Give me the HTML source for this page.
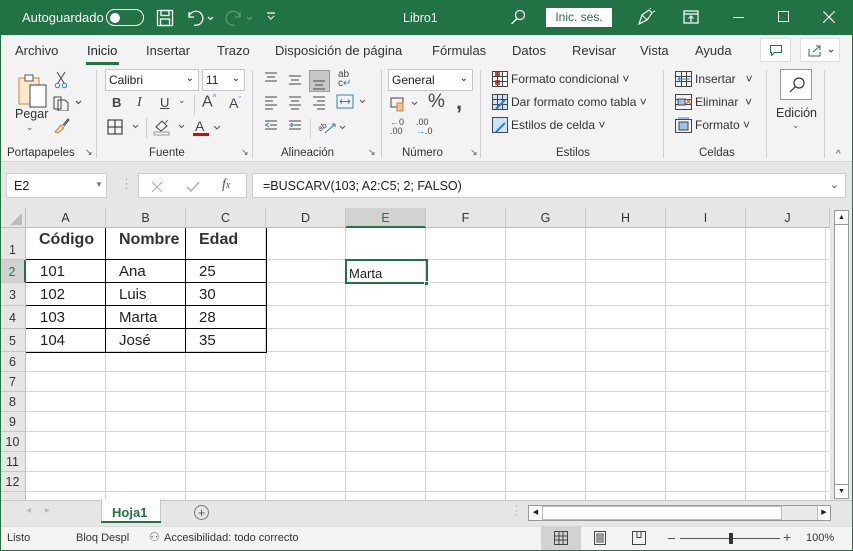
<!DOCTYPE html>
<html><head><meta charset="utf-8"><style>
*{margin:0;padding:0;box-sizing:border-box}
body{width:853px;height:551px;overflow:hidden;font-family:"Liberation Sans",Arial,sans-serif;background:#e6e6e6;position:relative;font-size:12px;color:#222}
.a{position:absolute}
.t{white-space:nowrap}
.title{left:0;top:0;width:853px;height:35px;background:#217346;color:#fff}
.tabs{left:0;top:35px;width:853px;height:30px;background:#f3f3f3}
.rib{left:0;top:65px;width:853px;height:97px;background:#f3f3f3;border-bottom:1px solid #d6d6d6}
.sep{width:1px;background:#d0d0d0;top:70px;height:88px}
.gl{font-size:11.5px;color:#333;top:147px}
.box{background:#fff;border:1px solid #c6c6c6}
.ch{top:208px;height:20px;background:#e6e6e6;border-right:1px solid #c8c8c8;border-bottom:1px solid #bdbdbd;text-align:center;line-height:20px;font-size:12.5px;color:#333}
.rh{left:0;width:26px;background:#e6e6e6;border-bottom:1px solid #c8c8c8;border-right:1px solid #bdbdbd;text-align:center;font-size:12.5px;color:#333}
.hl{left:26px;width:803px;height:1px;background:#d4d4d4}
.c{font-size:15px;color:#222}
.b{font-weight:bold;font-size:16px;color:#333}
.ic{color:#444;font-size:14px}
</style></head><body>
<div class="a title">
 <div class="a t" style="left:22px;top:10px;font-size:13px">Autoguardado</div>
 <div class="a" style="left:106px;top:9px;width:38px;height:17px;border:1.5px solid #fff;border-radius:9px"><div class="a" style="left:3px;top:2.5px;width:10px;height:10px;border-radius:5px;background:#fff"></div></div>
 <svg class="a" style="left:156px;top:9px" width="18" height="18" viewBox="0 0 18 18" fill="none" stroke="#fff" stroke-width="1.3"><rect x="1.5" y="1.5" width="15" height="15"/><rect x="5" y="1.5" width="8" height="5"/><rect x="4.5" y="10" width="9" height="6.5"/></svg>
 <svg class="a" style="left:186px;top:9px" width="30" height="18" viewBox="0 0 30 18" fill="none" stroke="#fff" stroke-width="1.3"><path d="M3 3v5h5M3 8a7 7 0 1 1 5 8"/><path d="M22 8l2.5 2.5L27 8"/></svg>
 <svg class="a" style="left:225px;top:9px" width="30" height="18" viewBox="0 0 30 18" fill="none" stroke="#5e9a76" stroke-width="1.3"><path d="M15 3v5h-5M15 8a7 7 0 1 0 -5 8"/><path d="M22 8l2.5 2.5L27 8"/></svg>
 <svg class="a" style="left:266px;top:11px" width="10" height="10" viewBox="0 0 10 10" stroke="#fff" fill="none" stroke-width="1.2"><path d="M1 2h8M2 5l3 3 3-3"/></svg>
 <div class="a t" style="left:403px;top:11px;font-size:12.5px">Libro1</div>
 <svg class="a" style="left:510px;top:9px" width="16" height="16" viewBox="0 0 16 16" fill="none" stroke="#fff" stroke-width="1.3"><circle cx="10" cy="6" r="4.5"/><path d="M7 9.5L1.5 15"/></svg>
 <div class="a t" style="left:546px;top:8px;width:66px;height:19px;background:#fff;color:#217346;text-align:center;line-height:19px;font-size:12px">Inic. ses.</div>
 <svg class="a" style="left:636px;top:8px" width="20" height="18" viewBox="0 0 20 18" fill="none" stroke="#fff" stroke-width="1.2"><path d="M3 16l3-9 7-5 3 3-5 7-8 4zM6 7l5 5M14 1l1-1M17 4l2-1"/></svg>
 <svg class="a" style="left:683px;top:10px" width="16" height="14" viewBox="0 0 16 14" fill="none" stroke="#fff" stroke-width="1.2"><rect x="1" y="1" width="14" height="12"/><path d="M1 4h14M8 12V6M5.5 8.5L8 6l2.5 2.5"/></svg>
 <div class="a" style="left:733px;top:17px;width:11px;height:1px;background:#fff"></div>
 <div class="a" style="left:778px;top:11px;width:11px;height:11px;border:1.2px solid #fff"></div>
 <svg class="a" style="left:823px;top:11px" width="12" height="12" viewBox="0 0 12 12" stroke="#fff" stroke-width="1.2"><path d="M0 0L12 12M12 0L0 12"/></svg>
</div>
<div class="a tabs">
 <div class="a t" style="left:15px;top:8px;font-size:13px;color:#333">Archivo</div>
 <div class="a t" style="left:87px;top:8px;font-size:13px;color:#222">Inicio</div>
 <div class="a" style="left:86px;top:27px;width:33px;height:3px;background:#217346"></div>
 <div class="a t" style="left:146px;top:8px;font-size:13px;color:#333">Insertar</div>
 <div class="a t" style="left:217px;top:8px;font-size:13px;color:#333">Trazo</div>
 <div class="a t" style="left:275px;top:8px;font-size:13px;color:#333">Disposición de página</div>
 <div class="a t" style="left:432px;top:8px;font-size:13px;color:#333">Fórmulas</div>
 <div class="a t" style="left:512px;top:8px;font-size:13px;color:#333">Datos</div>
 <div class="a t" style="left:572px;top:8px;font-size:13px;color:#333">Revisar</div>
 <div class="a t" style="left:640px;top:8px;font-size:13px;color:#333">Vista</div>
 <div class="a t" style="left:695px;top:8px;font-size:13px;color:#333">Ayuda</div>
 <div class="a box" style="left:760px;top:3px;width:31px;height:24px;border-color:#ddd"><svg class="a" style="left:9px;top:6px" width="12" height="11" viewBox="0 0 12 11" fill="none" stroke="#217346"><path d="M.5.5h11v7h-7l-3 3v-3h-1z"/></svg></div>
 <div class="a box" style="left:800px;top:3px;width:40px;height:24px;border-color:#ddd"><svg class="a" style="left:7px;top:5px" width="28" height="13" viewBox="0 0 28 13" fill="none" stroke="#217346"><path d="M1 5v7h11v-4M5 8l7-6M8 2h4v4"/><path d="M21 6l2 2 2-2" stroke="#444"/></svg></div>
</div>
<div class="a rib">
 <!-- Portapapeles -->
 <svg class="a" style="left:17px;top:8px" width="32" height="36" viewBox="0 0 32 36" fill="none"><rect x="2" y="5" width="20" height="26" fill="#fbe8c8" stroke="#c9853a"/><rect x="8" y="2" width="8" height="6" fill="#fff" stroke="#555"/><rect x="13" y="12" width="16" height="22" fill="#fff" stroke="#444"/></svg>
 <div class="a t" style="left:15px;top:42px;font-size:12.5px;color:#333">Pegar</div>
 <div class="a t" style="left:26px;top:57px;font-size:9px;color:#555">⌄</div>
 <svg class="a" style="left:54px;top:6px" width="14" height="18" viewBox="0 0 14 18" fill="none" stroke="#444"><path d="M3 1l7 11M11 1L4 12"/><circle cx="3.5" cy="14.5" r="2.2" stroke="#2b7cd3"/><circle cx="10.5" cy="14.5" r="2.2" stroke="#2b7cd3"/></svg>
 <svg class="a" style="left:53px;top:30px" width="30" height="16" viewBox="0 0 30 16" fill="none" stroke="#444"><path d="M1 2h7v12H1zM5 5h7l3 3v8H5z"/><path d="M23 6l2.5 2.5L28 6"/></svg>
 <svg class="a" style="left:54px;top:53px" width="16" height="16" viewBox="0 0 16 16" fill="none" stroke="#c9853a"><path d="M1 14l6-7 3 3-6 5z" fill="#fbd9a8"/><path d="M9 7l5-6 1 1-5 6" stroke="#444"/></svg>
 <div class="a gl t" style="left:7px;top:82px">Portapapeles</div>
 <div class="a t" style="left:85px;top:82px;font-size:9px;color:#555">↘</div>
 <div class="a sep" style="left:96px;top:5px"></div>
 <!-- Fuente -->
 <div class="a box" style="left:105px;top:4px;width:94px;height:22px"><span class="a t" style="left:3px;top:3px;font-size:12px">Calibri</span><span class="a" style="right:4px;top:3px;font-size:10px">⌄</span></div>
 <div class="a box" style="left:202px;top:4px;width:43px;height:22px"><span class="a t" style="left:3px;top:3px;font-size:12px">11</span><span class="a" style="right:4px;top:3px;font-size:10px">⌄</span></div>
 <div class="a t" style="left:112px;top:30px;font-weight:bold;font-size:13px;color:#444">B</div>
 <div class="a t" style="left:137px;top:30px;font-style:italic;font-family:'Liberation Serif';font-size:14px;color:#444">I</div>
 <div class="a t" style="left:160px;top:30px;text-decoration:underline;font-size:13px;color:#444">U</div>
 <div class="a t" style="left:178px;top:30px;font-size:9px;color:#555">⌄</div>
 <div class="a" style="left:194px;top:30px;width:1px;height:20px;background:#d0d0d0"></div>
 <div class="a t" style="left:202px;top:28px;font-size:16px;color:#444">A<sup style="font-size:8px;color:#2b7cd3">^</sup></div>
 <div class="a t" style="left:229px;top:30px;font-size:14px;color:#444">A<sup style="font-size:8px;color:#2b7cd3">ˇ</sup></div>
 <svg class="a" style="left:107px;top:54px" width="35" height="16" viewBox="0 0 35 16" fill="none" stroke="#222"><rect x="1" y="1" width="14" height="14"/><path d="M8 1v14M1 8h14"/><path d="M26 6l2.5 2.5L31 6" stroke="#555"/></svg>
 <div class="a" style="left:146px;top:53px;width:1px;height:20px;background:#d0d0d0"></div>
 <svg class="a" style="left:153px;top:52px" width="35" height="20" viewBox="0 0 35 20" fill="none" stroke="#444"><path d="M3 10l6-6 5 5-6 5z"/><path d="M12 6l3-3" stroke="#2b7cd3"/><rect x="1" y="15" width="15" height="3" stroke="#999"/><path d="M26 8l2.5 2.5L31 8" stroke="#555"/></svg>
 <div class="a t" style="left:195px;top:53px;font-size:14px;color:#444">A</div>
 <div class="a" style="left:193px;top:68px;width:16px;height:3px;background:#e00"></div>
 <svg class="a" style="left:213px;top:60px" width="10" height="6" viewBox="0 0 10 6" fill="none" stroke="#555"><path d="M1 1l3 3 3-3"/></svg>
 <div class="a gl t" style="left:149px;top:82px">Fuente</div>
 <div class="a t" style="left:241px;top:82px;font-size:9px;color:#555">↘</div>
 <div class="a sep" style="left:252px;top:5px"></div>
 <!-- Alineacion -->
 <svg class="a" style="left:264px;top:5px" width="70" height="70" viewBox="0 0 70 70" fill="none" stroke="#444">
  <path d="M1 3h12M3 7h8M1 11h12"/><path d="M25 6h12M27 10h8M25 14h12"/>
  <rect x="45.5" y=".5" width="20" height="21" fill="#c8c8c8" stroke="#999"/><path d="M49 11h12M51 15h8M49 19h12"/>
  <path d="M1 27h12M1 31h8M1 35h12M1 39h8"/><path d="M25 27h12M27 31h8M25 35h12M27 39h8"/><path d="M49 27h12M53 31h8M49 35h12M53 39h8"/>
  <path d="M1 51h12M6 55h7M1 59h12M2 55h-1" /><path d="M5 53l-3 2 3 2" stroke="#2b7cd3"/>
  <path d="M25 51h12M30 55h7M25 59h12"/><path d="M25 55h4l-2-2M29 55l-2 2" stroke="#2b7cd3"/>
 </svg>
 <div class="a t" style="left:338px;top:5px;font-size:10px;line-height:9px;color:#444">ab<br>c<span style="color:#2b7cd3">↵</span></div>
 <svg class="a" style="left:336px;top:29px" width="32" height="16" viewBox="0 0 32 16" fill="none" stroke="#2b7cd3"><rect x="1" y="1" width="16" height="13"/><path d="M4 7.5h10M4 7.5l2-2M4 7.5l2 2M14 7.5l-2-2M14 7.5l-2 2"/><path d="M24 6l2.5 2.5L29 6" stroke="#555"/></svg>
 <div class="a" style="left:310px;top:54px;width:1px;height:20px;background:#d0d0d0"></div>
 <svg class="a" style="left:317px;top:53px" width="34" height="18" viewBox="0 0 34 18" fill="none" stroke="#444"><text x="1" y="11" font-size="8" fill="#444" stroke="none" transform="rotate(-35 6 9)">ab</text><path d="M8 15l10-9M18 6h-3M18 6v3" stroke="#2b7cd3"/><path d="M23 8l2.5 2.5L28 8" stroke="#555"/></svg>
 <div class="a gl t" style="left:281px;top:82px">Alineación</div>
 <div class="a t" style="left:368px;top:82px;font-size:9px;color:#555">↘</div>
 <div class="a sep" style="left:381px;top:5px"></div>
 <!-- Numero -->
 <div class="a box" style="left:388px;top:4px;width:85px;height:22px"><span class="a t" style="left:3px;top:3px;font-size:12px">General</span><span class="a" style="right:4px;top:3px;font-size:10px">⌄</span></div>
 <svg class="a" style="left:390px;top:31px" width="34" height="16" viewBox="0 0 34 16" fill="none" stroke="#444"><rect x="1" y="2" width="12" height="9"/><rect x="7" y="7" width="6" height="8" fill="#f2c391" stroke="#c9853a"/><path d="M22 6l2.5 2.5L27 6" stroke="#555"/></svg>
 <div class="a t" style="left:428px;top:26px;font-size:19px;color:#444">%</div>
 <div class="a t" style="left:456px;top:24px;font-size:22px;font-weight:bold;color:#444">,</div>
 <div class="a t" style="left:390px;top:53px;font-size:9px;line-height:9px;color:#444"><span style="color:#2b7cd3">←</span>0<br>.00</div>
 <div class="a t" style="left:416px;top:53px;font-size:9px;line-height:9px;color:#444">.00<br><span style="color:#2b7cd3">→</span>.0</div>
 <div class="a gl t" style="left:402px;top:82px">Número</div>
 <div class="a t" style="left:470px;top:82px;font-size:9px;color:#555">↘</div>
 <div class="a sep" style="left:480px;top:5px"></div>
 <!-- Estilos -->
 <svg class="a" style="left:492px;top:6px" width="16" height="16" viewBox="0 0 16 16" fill="none" stroke="#444"><rect x=".5" y=".5" width="15" height="15" fill="#fff"/><rect x="3" y="1" width="5" height="5" fill="#e04848" stroke="none"/><rect x="3" y="9" width="5" height="5" fill="#e04848" stroke="none"/><path d="M.5 5.5h15M.5 10.5h15M5.5.5v15M10.5.5v15"/></svg>
 <div class="a t" style="left:511px;top:7px;font-size:12px;color:#333">Formato condicional ˅</div>
 <svg class="a" style="left:492px;top:29px" width="16" height="16" viewBox="0 0 16 16" fill="none" stroke="#444"><rect x=".5" y=".5" width="15" height="15" fill="#cfe3f7"/><path d="M.5 5.5h15M.5 10.5h15M5.5.5v15M10.5.5v15"/><path d="M4 15l9-9" stroke="#2b7cd3" stroke-width="2"/></svg>
 <div class="a t" style="left:511px;top:30px;font-size:12px;color:#333">Dar formato como tabla ˅</div>
 <svg class="a" style="left:492px;top:52px" width="16" height="16" viewBox="0 0 16 16" fill="none" stroke="#444"><rect x=".5" y=".5" width="15" height="15" fill="#cfe3f7"/><path d="M4 15l9-9" stroke="#2b7cd3" stroke-width="2"/></svg>
 <div class="a t" style="left:511px;top:53px;font-size:12px;color:#333">Estilos de celda ˅</div>
 <div class="a gl t" style="left:556px;top:82px">Estilos</div>
 <div class="a sep" style="left:663px;top:5px"></div>
 <!-- Celdas -->
 <svg class="a" style="left:675px;top:6px" width="17" height="16" viewBox="0 0 17 16" fill="none" stroke="#444"><rect x=".5" y=".5" width="16" height="15"/><path d="M.5 5.5h16M.5 10.5h16M6.5.5v15M11.5.5v15"/><path d="M3 8h12M3 8l3-3M3 8l3 3" stroke="#2b7cd3"/></svg>
 <div class="a t" style="left:695px;top:7px;font-size:12px;color:#333">Insertar &nbsp;&nbsp;˅</div>
 <svg class="a" style="left:675px;top:29px" width="17" height="16" viewBox="0 0 17 16" fill="none" stroke="#444"><rect x=".5" y=".5" width="16" height="15"/><path d="M.5 5.5h16M.5 10.5h16"/><rect x="3" y="5" width="7" height="6" fill="#9cc3ec"/><path d="M11 5l5 5M16 5l-5 5" stroke="#e05a1a"/></svg>
 <div class="a t" style="left:695px;top:30px;font-size:12px;color:#333">Eliminar &nbsp;˅</div>
 <svg class="a" style="left:675px;top:52px" width="17" height="16" viewBox="0 0 17 16" fill="none" stroke="#444"><rect x=".5" y="2.5" width="16" height="13"/><rect x="4" y="5" width="9" height="8" fill="#9cc3ec"/><path d="M3 1h11" stroke="#2b7cd3"/></svg>
 <div class="a t" style="left:695px;top:53px;font-size:12px;color:#333">Formato ˅</div>
 <div class="a gl t" style="left:699px;top:82px">Celdas</div>
 <div class="a sep" style="left:766px;top:5px"></div>
 <div class="a" style="left:780px;top:4px;width:32px;height:31px;border:1px solid #999;background:#fff"><svg class="a" style="left:7px;top:6px" width="18" height="18" viewBox="0 0 18 18" fill="none" stroke="#333" stroke-width="1.2"><circle cx="11" cy="7" r="5"/><path d="M7.5 10.5L2 16"/></svg></div>
 <div class="a t" style="left:776px;top:41px;font-size:12.5px;color:#333">Edición</div>
 <div class="a t" style="left:792px;top:55px;font-size:9px;color:#555">⌄</div>
 <div class="a sep" style="left:824px;top:5px"></div>
 <div class="a t" style="left:836px;top:84px;font-size:10px;color:#444">^</div>
</div>
<!-- formula bar -->
<div class="a box" style="left:6px;top:173px;width:101px;height:25px;border-color:#d0d0d0"><span class="a" style="left:7px;top:5px;font-size:12.5px">E2</span><span class="a" style="left:88px;top:6px;font-size:8px;color:#777">▼</span></div>
<div class="a t" style="left:120px;top:176px;color:#aaa;font-size:13px">⋮</div>
<div class="a box" style="left:138px;top:173px;width:109px;height:25px;border-color:#d0d0d0">
 <svg class="a" style="left:12px;top:7px" width="12" height="12" viewBox="0 0 12 12" stroke="#aaa"><path d="M1 1l10 10M11 1L1 11"/></svg>
 <svg class="a" style="left:47px;top:7px" width="14" height="12" viewBox="0 0 14 12" stroke="#aaa" fill="none" stroke-width="1.3"><path d="M1 6l4 4 8-9"/></svg>
 <span class="a" style="left:83px;top:3px;font-family:'Liberation Serif';font-style:italic;font-size:14px;color:#555">f<span style="font-size:10px">x</span></span>
</div>
<div class="a box" style="left:252px;top:173px;width:594px;height:25px;border-color:#d0d0d0"><span class="a t" style="left:10px;top:5px;font-size:12.5px">=BUSCARV(103; A2:C5; 2; FALSO)</span><span class="a" style="right:6px;top:4px;font-size:11px;color:#555">⌄</span></div>
<!-- grid -->
<div class="a" style="left:0;top:208px;width:26px;height:20px;background:#e6e6e6;border-right:1px solid #bdbdbd;border-bottom:1px solid #bdbdbd"><svg class="a" style="left:10px;top:5px" width="12" height="12"><path d="M12 0V12H0z" fill="#bbb"/></svg></div>
<div class="a ch" style="left:26px;width:80px">A</div>
<div class="a ch" style="left:106px;width:80px">B</div>
<div class="a ch" style="left:186px;width:80px">C</div>
<div class="a ch" style="left:266px;width:80px">D</div>
<div class="a ch" style="left:346px;width:80px;background:#d2d2d2;border-bottom:2px solid #217346;color:#217346">E</div>
<div class="a ch" style="left:426px;width:80px">F</div>
<div class="a ch" style="left:506px;width:80px">G</div>
<div class="a ch" style="left:586px;width:80px">H</div>
<div class="a ch" style="left:666px;width:80px">I</div>
<div class="a ch" style="left:746px;width:84px">J</div>
<div class="a" style="left:26px;top:228px;width:804px;height:272px;background:#fff repeating-linear-gradient(90deg,transparent 0 79px,#d4d4d4 79px 80px)"></div>
<div class="a rh" style="top:228px;height:32px;line-height:44px">1</div>
<div class="a rh" style="top:260px;height:23px;line-height:24px;background:#d2d2d2;color:#217346;border-right:2px solid #217346">2</div>
<div class="a rh" style="top:283px;height:23px;line-height:24px">3</div>
<div class="a rh" style="top:306px;height:23px;line-height:24px">4</div>
<div class="a rh" style="top:329px;height:23px;line-height:24px">5</div>
<div class="a rh" style="top:352px;height:20px;line-height:21px">6</div>
<div class="a rh" style="top:372px;height:20px;line-height:21px">7</div>
<div class="a rh" style="top:392px;height:20px;line-height:21px">8</div>
<div class="a rh" style="top:412px;height:20px;line-height:21px">9</div>
<div class="a rh" style="top:432px;height:20px;line-height:21px">10</div>
<div class="a rh" style="top:452px;height:20px;line-height:21px">11</div>
<div class="a rh" style="top:472px;height:20px;line-height:21px">12</div>
<div class="a rh" style="top:492px;height:8px;border-bottom:none"></div>
<div class="a hl" style="top:259px"></div><div class="a hl" style="top:282px"></div><div class="a hl" style="top:305px"></div><div class="a hl" style="top:328px"></div><div class="a hl" style="top:351px"></div><div class="a hl" style="top:371px"></div><div class="a hl" style="top:391px"></div><div class="a hl" style="top:411px"></div><div class="a hl" style="top:431px"></div><div class="a hl" style="top:451px"></div><div class="a hl" style="top:471px"></div><div class="a hl" style="top:491px"></div>
<!-- table borders -->
<div class="a" style="left:26px;top:228px;width:241px;height:125px;border:1px solid #000;border-left:none;border-top:none"></div>
<div class="a" style="left:26px;top:259px;width:240px;height:1px;background:#000"></div>
<div class="a" style="left:26px;top:282px;width:240px;height:1px;background:#000"></div>
<div class="a" style="left:26px;top:305px;width:240px;height:1px;background:#000"></div>
<div class="a" style="left:26px;top:328px;width:240px;height:1px;background:#000"></div>
<div class="a" style="left:105px;top:228px;width:1px;height:124px;background:#000"></div>
<div class="a" style="left:185px;top:228px;width:1px;height:124px;background:#000"></div>
<div class="a a t b" style="left:39px;top:231px">Código</div>
<div class="a t b" style="left:119px;top:231px">Nombre</div>
<div class="a t b" style="left:199px;top:231px">Edad</div>
<div class="a t c" style="left:40px;top:263px">101</div><div class="a t c" style="left:119px;top:263px">Ana</div><div class="a t c" style="left:199px;top:263px">25</div>
<div class="a t c" style="left:40px;top:286px">102</div><div class="a t c" style="left:119px;top:286px">Luis</div><div class="a t c" style="left:199px;top:286px">30</div>
<div class="a t c" style="left:40px;top:309px">103</div><div class="a t c" style="left:119px;top:309px">Marta</div><div class="a t c" style="left:199px;top:309px">28</div>
<div class="a t c" style="left:40px;top:332px">104</div><div class="a t c" style="left:119px;top:332px">José</div><div class="a t c" style="left:199px;top:332px">35</div>
<div class="a" style="left:345px;top:259px;width:83px;height:25px;border:2px solid #217346"></div>
<div class="a" style="left:424px;top:281px;width:5px;height:5px;background:#217346;border:1px solid #fff"></div>
<div class="a t" style="left:349px;top:266px;font-size:13px">Marta</div>
<!-- vscroll -->
<div class="a" style="left:830px;top:208px;width:23px;height:292px;background:#e6e6e6"></div>
<div class="a" style="left:834px;top:210px;width:15px;height:288px;border:1px solid #999;background:#fff"></div>
<div class="a" style="left:834px;top:210px;width:15px;height:15px;border:1px solid #999;background:#fff;font-size:7px;text-align:center;line-height:13px">▲</div>
<div class="a" style="left:834px;top:484px;width:15px;height:15px;border:1px solid #999;background:#fff;font-size:7px;text-align:center;line-height:13px">▼</div>
<!-- sheet tabs -->
<div class="a" style="left:0;top:500px;width:853px;height:25px;background:#e6e6e6;border-top:1px solid #c6c6c6"></div>
<div class="a t" style="left:26px;top:505px;color:#bbb;font-size:10px">◂ &nbsp;&nbsp;&nbsp; ▸</div>
<div class="a" style="left:101px;top:499px;width:60px;height:24px;background:#fff;border:1px solid #c6c6c6;border-top:none"></div>
<div class="a t" style="left:112px;top:505px;font-weight:bold;color:#217346;font-size:13px">Hoja1</div>
<div class="a" style="left:101px;top:521px;width:60px;height:2px;background:#217346"></div>
<div class="a" style="left:194px;top:505px;width:15px;height:15px;border:1px solid #777;border-radius:8px;text-align:center;line-height:13px;color:#555;font-size:13px">+</div>
<div class="a t" style="left:510px;top:503px;color:#bbb;font-size:13px">⋮</div>
<div class="a" style="left:528px;top:505px;width:303px;height:16px;border:1px solid #999;background:#e9e9e9"></div>
<div class="a" style="left:542px;top:506px;width:240px;height:14px;background:#fff;border:1px solid #bbb"></div>
<div class="a" style="left:529px;top:506px;width:13px;height:14px;background:#fff;font-size:7px;line-height:14px;text-align:center">◀</div>
<div class="a" style="left:817px;top:506px;width:13px;height:14px;background:#fff;border-left:1px solid #bbb;font-size:7px;line-height:14px;text-align:center">▶</div>
<!-- status bar -->
<div class="a" style="left:0;top:526px;width:853px;height:25px;background:#f3f3f3;border-top:1px solid #ddd"></div>
<div class="a t" style="left:7px;top:532px;font-size:11px;color:#333">Listo</div>
<div class="a t" style="left:76px;top:532px;font-size:11px;color:#333">Bloq Despl</div>
<div class="a t" style="left:149px;top:530px;font-size:12px;color:#666">⚇</div>
<div class="a t" style="left:164px;top:532px;font-size:11px;color:#333">Accesibilidad: todo correcto</div>
<div class="a" style="left:541px;top:526px;width:40px;height:25px;background:#d2d2d2"></div>
<svg class="a" style="left:554px;top:531px" width="14" height="14" viewBox="0 0 14 14" fill="none" stroke="#444"><rect x=".5" y=".5" width="13" height="13"/><path d="M5 .5v13M9 .5v13M.5 5h13M.5 9h13"/></svg>
<svg class="a" style="left:594px;top:531px" width="12" height="14" viewBox="0 0 12 14" fill="none" stroke="#444"><rect x=".5" y=".5" width="11" height="13"/><rect x="3" y="3" width="6" height="8"/><path d="M4 5h4M4 7h4M4 9h4"/></svg>
<svg class="a" style="left:632px;top:531px" width="14" height="14" viewBox="0 0 14 14" fill="none" stroke="#444"><path d="M.5 .5h13v13H.5zM5 .5v6h4V.5"/></svg>
<div class="a" style="left:668px;top:538px;width:7px;height:1px;background:#555"></div>
<div class="a" style="left:680px;top:538px;width:100px;height:1px;background:#555"></div>
<div class="a" style="left:729px;top:533px;width:4px;height:11px;background:#333"></div>
<div class="a t" style="left:783px;top:529px;font-size:14px;color:#555">+</div>
<div class="a t" style="left:806px;top:532px;font-size:11px;color:#333">100%</div>
<div class="a" style="left:0;top:35px;width:1px;height:516px;background:#217346"></div>
<div class="a" style="left:852px;top:35px;width:1px;height:516px;background:#217346"></div>
<div class="a" style="left:0;top:550px;width:853px;height:1px;background:#217346"></div>
</body></html>
